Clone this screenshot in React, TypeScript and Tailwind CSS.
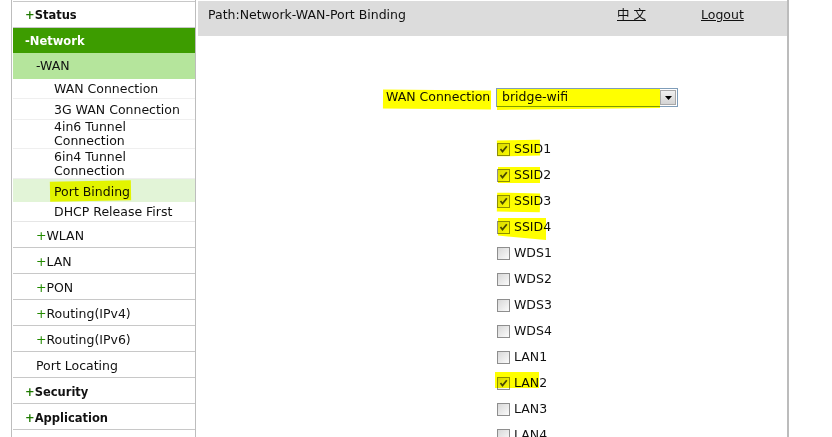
import React from 'react'

const SUB_ITEMS = [
  { label: ['WAN Connection'], h: 'h-[20px]' },
  { label: ['3G WAN Connection'], h: 'h-[21px] pt-[2px]' },
  { label: ['4in6 Tunnel', 'Connection'], h: 'h-[29px]' },
  { label: ['6in4 Tunnel', 'Connection'], h: 'h-[30px]' },
]

const NET_ITEMS = ['WLAN', 'LAN', 'PON', 'Routing(IPv4)', 'Routing(IPv6)']

const PORTS = [
  { name: 'SSID1', checked: true, mark: 'top-[4px] left-0 w-[43px] h-[16px] -rotate-1' },
  { name: 'SSID2', checked: true, mark: 'top-[5px] left-[1px] w-[42px] h-[16px]' },
  { name: 'SSID3', checked: true, mark: 'top-[5px] left-0 w-[43px] h-[19px] rotate-1' },
  { name: 'SSID4', checked: true, mark: 'top-[4px] left-[1px] w-[48px] h-[22px] [clip-path:polygon(0_0,100%_0,100%_100%,0_80%)]' },
  { name: 'WDS1' },
  { name: 'WDS2' },
  { name: 'WDS3' },
  { name: 'WDS4' },
  { name: 'LAN1' },
  { name: 'LAN2', checked: true, mark: 'top-[2px] -left-[2px] w-[44px] h-[16px]' },
  { name: 'LAN3' },
  { name: 'LAN4' },
]

function Plus({ bold }: { bold?: boolean }) {
  return <span className={bold ? 'text-[#1f7a00] font-black' : 'text-[#238a00]'}>+</span>
}

function CheckBox({ checked }: { checked?: boolean }) {
  return (
    <span className="relative w-[13px] h-[13px] border border-[#8e8e8e] bg-gradient-to-br from-[#d8d8d8] to-[#fbfbfb] shrink-0">
      {checked && (
        <svg viewBox="0 0 11 11" className="absolute inset-0 w-[11px] h-[11px]">
          <path d="M2.5 5 L4.5 7.5 L8.8 2.2" stroke="#4a4a4a" strokeWidth="1.8" fill="none" />
        </svg>
      )}
    </span>
  )
}

export default function App() {
  return (
    <div className="w-[832px] h-[437px] overflow-hidden bg-white flex font-['DejaVu_Sans','Noto_Sans_CJK_SC',sans-serif] text-[12.5px] text-[#111]">
      {/* Sidebar */}
      <div className="ml-[11px] w-[185px] border-l border-r border-[#bdbdbd] pl-[1px] flex flex-col shrink-0">
        <div className="mt-[1px] border-t border-[#c8c8c8] shrink-0" />
        <div className="h-[26px] shrink-0 border-b border-[#c8c8c8] flex items-center pt-[2px] pl-[12px] font-bold text-[11.5px]">
          <Plus bold />Status
        </div>
        <div className="h-[25px] shrink-0 bg-[#3d9c00] flex items-center pt-[2px] pl-[12px] font-bold text-[11.5px] text-white">-Network</div>
        <div className="h-[26px] shrink-0 bg-[#b5e59c] flex items-center pt-[1px] pl-[23px]">-WAN</div>
        {SUB_ITEMS.map(item => (
          <div key={item.label[0]} className={`${item.h} shrink-0 border-b border-[#efefef] flex flex-col justify-center pl-[41px] leading-[14px]`}>
            {item.label.map(l => <span key={l}>{l}</span>)}
          </div>
        ))}
        <div className="h-[23px] shrink-0 bg-[#e2f4d7] flex items-center pt-[3px] pl-[41px]">
          <span className="relative">
            Port Binding
            <span className="absolute -left-[4px] -top-[2px] w-[81px] h-[20px] bg-[#ffff00] mix-blend-multiply -rotate-1" />
          </span>
        </div>
        <div className="h-[20px] shrink-0 border-b border-[#e6e6e6] flex items-center pt-[1px] pl-[41px]">DHCP Release First</div>
        {NET_ITEMS.map(n => (
          <div key={n} className="h-[26px] shrink-0 border-b border-[#c8c8c8] flex items-center pt-[4px] pl-[23px]">
            <Plus />{n}
          </div>
        ))}
        <div className="h-[26px] shrink-0 border-b border-[#c8c8c8] flex items-center pt-[4px] pl-[23px]">Port Locating</div>
        <div className="h-[26px] shrink-0 border-b border-[#c8c8c8] flex items-center pt-[4px] pl-[12px] font-bold text-[11.5px]">
          <Plus bold />Security
        </div>
        <div className="h-[26px] shrink-0 border-b border-[#c8c8c8] flex items-center pt-[4px] pl-[12px] font-bold text-[11.5px]">
          <Plus bold />Application
        </div>
      </div>

      {/* Main */}
      <div className="ml-[2px] w-[591px] border-r-2 border-[#bcbcbc] flex flex-col shrink-0">
        <div className="mt-[1px] h-[35px] shrink-0 bg-[#dcdcdc] flex items-start pt-[5px] pl-[10px]">
          <span className="w-[409px]">Path:Network-WAN-Port Binding</span>
          <span className="w-[84px] underline">中 文</span>
          <span className="underline">Logout</span>
        </div>

        <div className="relative mt-[52px] ml-[188px] flex items-center h-[19px] shrink-0">
          <span className="w-[110px]">WAN Connection</span>
          <div className="w-[182px] h-[19px] border border-[#7f9db9] bg-white flex items-center">
            <span className="flex-1 pl-[5px]">bridge-wifi</span>
            <span className="w-[16px] h-[15px] mr-[1px] bg-gradient-to-b from-[#f0f0f0] to-[#d4d4d4] border border-[#a8a8a8] flex items-center justify-center">
              <svg viewBox="0 0 7 4" className="w-[7px] h-[4px]">
                <path d="M0 0 H7 L3.5 4 Z" fill="#000" />
              </svg>
            </span>
          </div>
          <span className="absolute -left-[3px] top-[2px] w-[108px] h-[19px] bg-[#ffff00] mix-blend-multiply rotate-[0.5deg]" />
          <span className="absolute left-[111px] top-[1px] w-[163px] h-[21px] bg-[#ffff00] mix-blend-multiply [clip-path:polygon(0_0,100%_0,100%_90%,0_100%)]" />
        </div>

        <div className="mt-[29px] ml-[299px] flex flex-col shrink-0">
          {PORTS.map(p => (
            <div key={p.name} className="relative h-[26px] shrink-0 flex items-center gap-[4px]">
              <CheckBox checked={p.checked} />
              <span>{p.name}</span>
              {p.mark && <span className={`absolute bg-[#ffff00] mix-blend-multiply ${p.mark}`} />}
            </div>
          ))}
        </div>
      </div>
    </div>
  )
}
